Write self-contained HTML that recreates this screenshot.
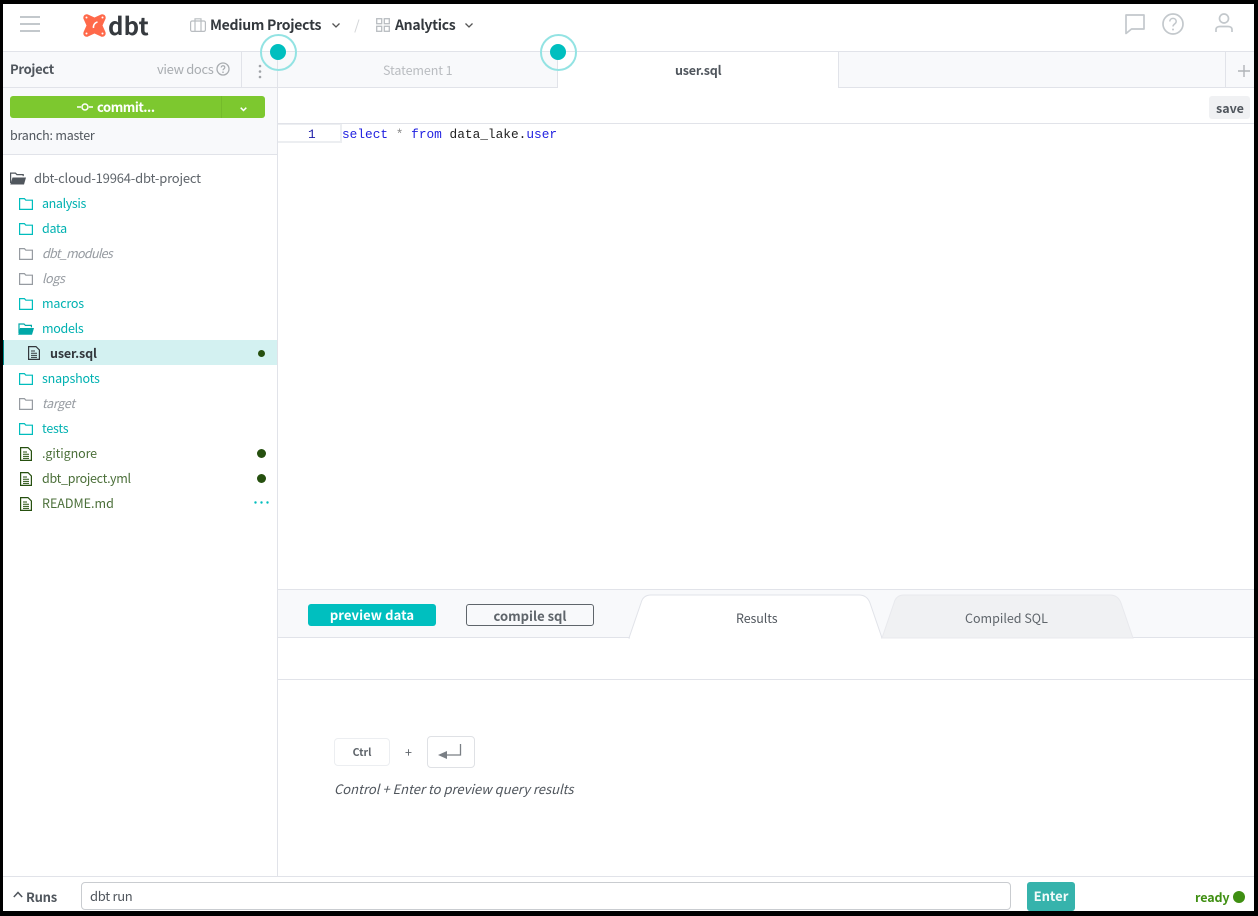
<!DOCTYPE html>
<html><head><meta charset="utf-8">
<style>
html,body{margin:0;padding:0;background:#000}
body{width:1258px;height:916px;overflow:hidden;position:relative;font-family:"Noto Sans CJK JP","Liberation Sans",sans-serif;font-size:13px;color:#50565d}
#p{position:absolute;left:0;top:0;width:1258px;height:916px;background:#fff;overflow:hidden}
.a{position:absolute}
.t{position:absolute;white-space:nowrap;line-height:18px}
.f{font-size:12.5px}
.ln{position:absolute;background:#e1e3e9}
svg{position:absolute;overflow:visible}
.m{font-family:"Liberation Mono",monospace;font-size:12.8px}
</style></head><body>
<div id="p">

<!-- header -->
<svg style="left:20px;top:16px" width="20" height="16"><path d="M0 1h20M0 8h20M0 15h20" stroke="#c3c8cc" stroke-width="2"/></svg>
<svg style="left:83px;top:14px" width="23" height="23" viewBox="0 0 23 23"><path d="M1.500 1Q3.500-.5 5.500.8L11.500 3.500 17.500.8Q19.500-.5 21.500 1 23.500 3 22.200 5.500L19.500 11.500 22.200 17.500Q23.500 20 21.500 22 19.500 23.500 17.500 22.200L11.500 19.500 5.500 22.200Q3.500 23.500 1.500 22-.5 20 .8 17.500L3.500 11.500.8 5.500Q-.5 3 1.500 1z" fill="#ff694a"/><path d="M14.500 8c-2.500.5-4.500 3-4 6" stroke="#fff" stroke-width="1.500" fill="none"/><circle cx="3.500" cy="3.500" r="1" fill="#fff"/><circle cx="19.500" cy="3.500" r="1" fill="#fff"/><circle cx="3.500" cy="19.500" r="1" fill="#fff"/><circle cx="19.500" cy="19.500" r="1" fill="#fff"/></svg>
<div class="t" style="left:108px;top:10px;font-size:24px;line-height:30px;font-weight:700;color:#363a3f;letter-spacing:.2px">dbt</div>

<svg style="left:190px;top:18px" width="16" height="14"><rect x=".6" y="3" width="14.800" height="10.400" rx="1.500" fill="none" stroke="#b9bdc1" stroke-width="1.200"/><path d="M5 3V.8h6V3M5 3v10.400M11 3v10.400" fill="none" stroke="#b9bdc1" stroke-width="1.200"/></svg>
<div class="t" style="left:210px;top:16px;font-weight:700;color:#33383d;font-size:14px;letter-spacing:-.27px">Medium Projects</div>
<svg style="left:332px;top:23px" width="8" height="5"><path d="M.5.500l3.500 3.500 3.500-3.500" fill="none" stroke="#555" stroke-width="1.300"/></svg>
<svg style="left:354px;top:19px" width="6" height="14"><path d="M5 .5L.8 13.500" stroke="#d4d6d9" stroke-width="1"/></svg>
<svg style="left:376px;top:18px" width="14" height="14"><g fill="none" stroke="#b9bdc1" stroke-width="1.300"><rect x=".7" y=".7" width="5" height="5"/><rect x="8.300" y=".7" width="5" height="5"/><rect x=".7" y="8.300" width="5" height="5"/><rect x="8.300" y="8.300" width="5" height="5"/></g></svg>
<div class="t" style="left:395px;top:16px;font-weight:700;color:#33383d;font-size:14px;letter-spacing:-.3px">Analytics</div>
<svg style="left:465px;top:23px" width="8" height="5"><path d="M.5.500l3.500 3.500 3.500-3.500" fill="none" stroke="#555" stroke-width="1.300"/></svg>

<svg style="left:1125px;top:14px" width="20" height="20"><path d="M1 1h18v14H6.500L1 19.500z" fill="none" stroke="#c3c8cc" stroke-width="1.700" stroke-linejoin="round"/></svg>
<svg style="left:1162px;top:13px" width="22" height="22"><circle cx="11" cy="11" r="10" fill="none" stroke="#c3c8cc" stroke-width="1.700"/><path d="M7.800 8.500c0-4.200 6.400-4.200 6.400 0 0 2.500-3.200 2.500-3.200 5" fill="none" stroke="#c3c8cc" stroke-width="1.500"/><circle cx="11" cy="16.500" r="1" fill="#c3c8cc"/></svg>
<svg style="left:1215px;top:13px" width="18" height="21"><circle cx="9" cy="5.500" r="4.500" fill="none" stroke="#c3c8cc" stroke-width="1.700"/><path d="M1 19v-2.500c0-2 2-3 4-3h8c2 0 4 1 4 3V19" fill="none" stroke="#c3c8cc" stroke-width="1.700"/></svg>

<!-- tab bar -->
<div class="a" style="left:3px;top:52px;width:1251px;height:36px;background:#f8f9fb"></div>
<div class="ln" style="left:3px;top:51px;width:1251px;height:1px"></div>
<div class="ln" style="left:3px;top:87px;width:1251px;height:1px"></div>
<div class="ln" style="left:241px;top:52px;width:1px;height:36px"></div>
<div class="t" style="left:10px;top:60px;font-weight:700;color:#50565d;letter-spacing:-.3px">Project</div>
<div class="t" style="left:157px;top:60px;color:#a9adb1;font-size:13px;letter-spacing:-.35px">view docs</div>
<svg style="left:216px;top:62px" width="14" height="14"><circle cx="7" cy="7" r="6" fill="none" stroke="#a9adb1" stroke-width="1.300"/><path d="M5.200 5.500c0-2.300 3.600-2.300 3.600 0 0 1.400-1.800 1.400-1.800 2.800" fill="none" stroke="#a9adb1" stroke-width="1.200"/><circle cx="7" cy="10.200" r=".8" fill="#a9adb1"/></svg>
<svg style="left:258px;top:64px" width="4" height="15"><circle cx="2" cy="2" r="1.300" fill="#a0a4a8"/><circle cx="2" cy="7.500" r="1.300" fill="#a0a4a8"/><circle cx="2" cy="13" r="1.300" fill="#a0a4a8"/></svg>

<div class="t" style="left:383px;top:61px;color:#b9bcc0;font-size:12.500px;letter-spacing:-.08px">Statement 1</div>
<div class="a" style="left:557px;top:52px;width:282px;height:36px;background:#fff;border-left:1px solid #e1e3e9;border-right:1px solid #e1e3e9;box-sizing:border-box"></div>
<div class="t" style="left:675px;top:61px;font-weight:700;color:#50565d;font-size:12.500px;letter-spacing:-.2px">user.sql</div>
<div class="ln" style="left:1225px;top:52px;width:1px;height:36px"></div>
<svg style="left:1238px;top:65px" width="12" height="12"><path d="M6 0v12M0 6h12" stroke="#b0b4b8" stroke-width="1.400"/></svg>

<!-- sidebar -->
<div class="a" style="left:3px;top:88px;width:274px;height:66px;background:#f8f9fb"></div>
<div class="ln" style="left:3px;top:154px;width:274px;height:1px"></div>
<div class="ln" style="left:277px;top:52px;width:1px;height:825px"></div>
<div class="a" style="left:10px;top:96px;width:255px;height:22px;background:#7dc82f;border-radius:3px"></div>
<div class="a" style="left:221px;top:96px;width:1px;height:22px;background:#74bb2b"></div>
<svg style="left:77px;top:103px" width="16" height="8"><path d="M0 4h4M12 4h4" stroke="#fff" stroke-width="1.500"/><circle cx="8" cy="4" r="3" fill="none" stroke="#fff" stroke-width="1.500"/></svg>
<div class="t" style="left:97px;top:98px;font-weight:700;color:#fff;letter-spacing:-.45px">commit...</div>
<svg style="left:240px;top:107px" width="7" height="5"><path d="M.7.700L3.500 3.500 6.300.7" fill="none" stroke="#fff" stroke-width="1.500"/></svg>
<div class="t" style="left:10px;top:126px;color:#50565d;font-size:12.500px;letter-spacing:-.22px">branch: master</div>

<!-- tree -->
<svg style="left:10px;top:172px" width="16" height="13"><path d="M.6 11V1.100h4.800l1.500 1.500h6.300v1.500" fill="none" stroke="#50565d" stroke-width="1.200"/><path d="M.3 12.500L2.500 5.500H16L14 12.500z" fill="#50565d"/></svg>
<div class="t" style="left:34px;top:169px;color:#5f656b;letter-spacing:-.19px">dbt-cloud-19964-dbt-project</div>

<svg style="left:19px;top:198px" width="14" height="12"><path d="M.6 11.400V.6h4.800l1.400 1.600h6.600v9.200z" fill="none" stroke="#00bdbd" stroke-width="1.200"/></svg>
<div class="t f" style="left:42px;top:194px;color:#00b1b1;letter-spacing:-.37px">analysis</div>
<svg style="left:19px;top:223px" width="14" height="12"><path d="M.6 11.400V.6h4.800l1.400 1.600h6.600v9.200z" fill="none" stroke="#00bdbd" stroke-width="1.200"/></svg>
<div class="t f" style="left:42px;top:219px;color:#00b1b1;letter-spacing:-.3px">data</div>
<svg style="left:19px;top:248px" width="14" height="12"><path d="M.6 11.400V.6h4.800l1.400 1.600h6.600v9.200z" fill="none" stroke="#969ba1" stroke-width="1.200"/></svg>
<div class="t f" style="left:42px;top:244px;color:#969ba1;font-style:italic;letter-spacing:-.7px">dbt_modules</div>
<svg style="left:19px;top:273px" width="14" height="12"><path d="M.6 11.400V.6h4.800l1.400 1.600h6.600v9.200z" fill="none" stroke="#969ba1" stroke-width="1.200"/></svg>
<div class="t f" style="left:42px;top:269px;color:#969ba1;font-style:italic;letter-spacing:-.4px">logs</div>
<svg style="left:19px;top:298px" width="14" height="12"><path d="M.6 11.400V.6h4.800l1.400 1.600h6.600v9.200z" fill="none" stroke="#00bdbd" stroke-width="1.200"/></svg>
<div class="t f" style="left:42px;top:294px;color:#00b1b1;letter-spacing:-.2px">macros</div>
<svg style="left:18px;top:323px" width="16" height="12"><path d="M1 10V1h5l1.400 1.400h6v2" fill="none" stroke="#00a8a8" stroke-width="1.200"/><path d="M.2 11.800L2 5h14l-2 6.800z" fill="#00a8a8"/></svg>
<div class="t f" style="left:42px;top:319px;color:#00b1b1;letter-spacing:-.3px">models</div>

<div class="a" style="left:3px;top:340px;width:274px;height:25px;background:#d3f1f1"></div>
<div class="a" style="left:3px;top:340px;width:1px;height:25px;background:#008b8b"></div>
<svg style="left:28px;top:346px" width="12" height="14"><path d="M.6.600h7.400l3.400 3.400v9.400H.6z" fill="none" stroke="#33383d" stroke-width="1.200"/><path d="M3 5h4M3 7.300h6M3 9.400h6M3 11.400h6" stroke="#33383d" stroke-width="1"/></svg>
<div class="t f" style="left:50px;top:344px;font-weight:700;color:#33383d;letter-spacing:-.15px">user.sql</div>
<div class="a" style="left:258px;top:350px;width:7px;height:7px;border-radius:50%;background:#26500f"></div>

<svg style="left:19px;top:373px" width="14" height="12"><path d="M.6 11.400V.6h4.800l1.400 1.600h6.600v9.200z" fill="none" stroke="#00bdbd" stroke-width="1.200"/></svg>
<div class="t f" style="left:42px;top:369px;color:#00b1b1;letter-spacing:-.2px">snapshots</div>
<svg style="left:19px;top:398px" width="14" height="12"><path d="M.6 11.400V.6h4.800l1.400 1.600h6.600v9.200z" fill="none" stroke="#969ba1" stroke-width="1.200"/></svg>
<div class="t f" style="left:42px;top:394px;color:#969ba1;font-style:italic;letter-spacing:-.3px">target</div>
<svg style="left:19px;top:423px" width="14" height="12"><path d="M.6 11.400V.6h4.800l1.400 1.600h6.600v9.200z" fill="none" stroke="#00bdbd" stroke-width="1.200"/></svg>
<div class="t f" style="left:42px;top:419px;color:#00b1b1;letter-spacing:-.2px">tests</div>

<svg style="left:20px;top:447px" width="12" height="14"><path d="M.6.600h7.400l3.400 3.400v9.400H.6z" fill="none" stroke="#26500f" stroke-width="1.200"/><path d="M3 5h4M3 7.300h6M3 9.400h6M3 11.400h6" stroke="#26500f" stroke-width="1"/></svg>
<div class="t f" style="left:42px;top:444px;color:#4b6f39;letter-spacing:-.1px">.gitignore</div>
<div class="a" style="left:257px;top:449px;width:9px;height:9px;border-radius:50%;background:#26500f"></div>
<svg style="left:20px;top:472px" width="12" height="14"><path d="M.6.600h7.400l3.400 3.400v9.400H.6z" fill="none" stroke="#26500f" stroke-width="1.200"/><path d="M3 5h4M3 7.300h6M3 9.400h6M3 11.400h6" stroke="#26500f" stroke-width="1"/></svg>
<div class="t f" style="left:42px;top:469px;color:#4b6f39;letter-spacing:-.3px">dbt_project.yml</div>
<div class="a" style="left:257px;top:474px;width:9px;height:9px;border-radius:50%;background:#26500f"></div>
<svg style="left:20px;top:497px" width="12" height="14"><path d="M.6.600h7.400l3.400 3.400v9.400H.6z" fill="none" stroke="#26500f" stroke-width="1.200"/><path d="M3 5h4M3 7.300h6M3 9.400h6M3 11.400h6" stroke="#26500f" stroke-width="1"/></svg>
<div class="t f" style="left:42px;top:494px;color:#4b6f39">README.md</div>
<svg style="left:254px;top:501px" width="15" height="3"><circle cx="1.500" cy="1.500" r="1.200" fill="#00bdbd"/><circle cx="7.500" cy="1.500" r="1.200" fill="#00bdbd"/><circle cx="13.500" cy="1.500" r="1.200" fill="#00bdbd"/></svg>

<!-- editor -->
<div class="a" style="left:1209px;top:96px;width:41px;height:23px;background:#f0f1f3;border-radius:3px"></div>
<div class="t" style="left:1216px;top:99px;font-weight:700;color:#50565d;font-size:12.500px">save</div>
<div class="ln" style="left:278px;top:123px;width:976px;height:1px"></div>
<div class="a" style="left:278px;top:124px;width:64px;height:19px;background:#fff;box-sizing:border-box;border:2px solid #eceef1;border-left:0;border-top:1px solid #eceef1"></div>
<div class="t m" style="left:308px;top:126px;color:#1a1aa6">1</div>
<div class="t m" style="left:342px;top:126px;color:#222"><span style="color:#1f1fe0">select</span> <span style="color:#888">*</span> <span style="color:#1f1fe0">from</span> data_lake.<span style="color:#1f1fe0">user</span></div>

<!-- bottom pane -->
<div class="a" style="left:278px;top:590px;width:976px;height:47px;background:#f8f9fb"></div>
<div class="ln" style="left:278px;top:589px;width:976px;height:1px"></div>
<div class="ln" style="left:278px;top:637px;width:976px;height:1px"></div>
<div class="ln" style="left:278px;top:679px;width:976px;height:1px"></div>
<div class="a" style="left:308px;top:604px;width:128px;height:22px;background:#00bfbf;border-radius:3px"></div>
<div class="t" style="left:308px;top:606px;width:128px;text-align:center;color:#fff;font-weight:700;letter-spacing:.1px">preview data</div>
<div class="a" style="left:466px;top:604px;width:128px;height:22px;box-sizing:border-box;border:1px solid #5f656b;border-radius:3px"></div>
<div class="t" style="left:466px;top:607px;width:128px;text-align:center;color:#5f656b;font-weight:700">compile sql</div>

<svg style="left:628px;top:594px" width="510" height="46"><path d="M254 44L242 9Q239 1 231 1H23Q15 1 13 9L1 44z" fill="#fff" stroke="#e1e3e9"/><path d="M254 44L266 9Q268 1 276 1H482Q490 1 493 9L505 44z" fill="#f0f1f3" stroke="#e8e9ed"/><path d="M2 43.500h251" stroke="#fff" stroke-width="2"/></svg>
<div class="t" style="left:736px;top:609px;color:#50565d;font-size:12.500px;letter-spacing:-.1px">Results</div>
<div class="t" style="left:965px;top:609px;color:#5f656b;font-size:12.500px">Compiled SQL</div>

<div class="a" style="left:334px;top:738px;width:56px;height:28px;box-sizing:border-box;border:1px solid #eceef1;border-radius:4px"></div>
<div class="t" style="left:334px;top:744px;width:56px;text-align:center;color:#5f656b;font-size:10.500px;font-weight:700">Ctrl</div>
<div class="t" style="left:405px;top:743px;color:#5f656b;font-size:12.500px">+</div>
<div class="a" style="left:427px;top:736px;width:48px;height:32px;box-sizing:border-box;border:1px solid #dfe1e5;border-radius:4px"></div>
<svg style="left:438px;top:744px" width="24" height="15"><path d="M22.500 0v11H8" fill="none" stroke="#7a7f85" stroke-width="1.300"/><path d="M0 11L9 7v8z" fill="#7a7f85"/></svg>
<div class="t" style="left:334px;top:780px;color:#50565d;font-style:italic;font-size:13px">Control + Enter to preview query results</div>

<!-- footer -->
<div class="ln" style="left:3px;top:876px;width:1251px;height:1px"></div>
<svg style="left:13px;top:891px" width="10" height="7"><path d="M.8 6L5 1.500 9.200 6" fill="none" stroke="#50565d" stroke-width="1.500"/></svg>
<div class="t" style="left:26px;top:888px;font-weight:700;color:#50565d;letter-spacing:-.25px">Runs</div>
<div class="a" style="left:81px;top:882px;width:930px;height:28px;box-sizing:border-box;border:1px solid #c9ccd0;border-radius:4px"></div>
<div class="t" style="left:90px;top:887px;color:#50565d;letter-spacing:-.3px">dbt run</div>
<div class="a" style="left:1027px;top:882px;width:48px;height:29px;background:#36b3ac;border-radius:3px"></div>
<div class="t" style="left:1027px;top:887px;width:48px;text-align:center;color:#f3fbfa;font-weight:700">Enter</div>
<div class="t" style="left:1195px;top:888px;color:#3f8f12;font-weight:700;font-size:12.500px;letter-spacing:-.1px">ready</div>
<div class="a" style="left:1233px;top:891px;width:12px;height:12px;border-radius:50%;background:#3f8f12"></div>

<!-- beacons -->
<div class="a" style="left:260px;top:34px;width:37px;height:37px;box-sizing:border-box;border:2px solid #93e3e3;border-radius:50%"></div>
<div class="a" style="left:270px;top:44px;width:16px;height:16px;border-radius:50%;background:#00bfbf"></div>
<div class="a" style="left:540px;top:34px;width:37px;height:37px;box-sizing:border-box;border:2px solid #93e3e3;border-radius:50%"></div>
<div class="a" style="left:550px;top:44px;width:16px;height:16px;border-radius:50%;background:#00bfbf"></div>

<!-- black frame -->
<div class="a" style="left:0;top:0;width:1258px;height:4px;background:#000"></div>
<div class="a" style="left:0;top:0;width:3px;height:916px;background:#000"></div>
<div class="a" style="left:1254px;top:0;width:4px;height:916px;background:#000"></div>
<div class="a" style="left:0;top:911px;width:1258px;height:5px;background:#000"></div>
</div>
</body></html>
